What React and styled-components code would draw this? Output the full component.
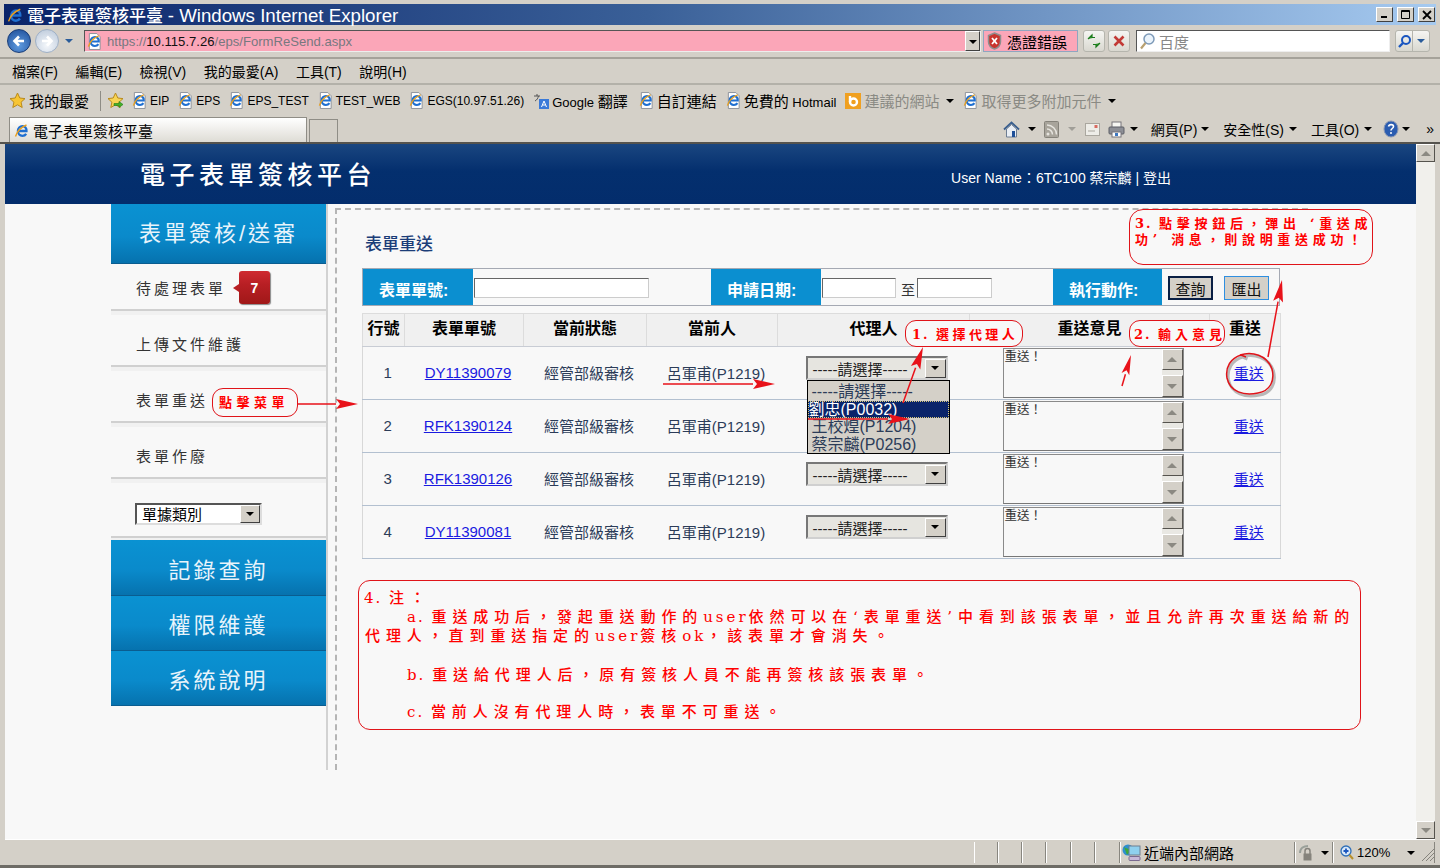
import React from 'react';
import styled, { createGlobalStyle } from 'styled-components';

const CJK = '"Liberation Sans", "Noto Sans CJK TC", sans-serif';
const ANNOT = '"DejaVu Serif", "Noto Sans CJK TC", serif';

const Global = createGlobalStyle`
  html, body { margin: 0; padding: 0; background: #d4d0c8; overflow: hidden; }
  * { box-sizing: border-box; }
`;

const Win = styled.div`
  position: relative; width: 1440px; height: 868px; overflow: hidden;
  background: #d4d0c8; font-family: ${CJK}; color: #000;
  display: flex; flex-direction: column; padding-top: 4px;
  border-bottom: 3px solid #6e6c66;
`;
const TitleBar = styled.div`
  height: 21px; margin: 0 4px; flex: none; display: flex; align-items: center; gap: 3px; padding-left: 3px;
  background: linear-gradient(90deg, #0a246a 0%, #3a6098 45%, #a6caf0 100%);
  color: #fff; font-size: 17px; font-weight: 500; white-space: nowrap;
`;
const TitleText = styled.span` flex: 1; `;
const TitleLatin = styled.span` font-size: 18.700px; `;
const WinBtn = styled.div`
  width: 17px; height: 15px; margin-right: 1px; background: #d4d0c8; display: flex; align-items: center; justify-content: center;
  border: 1px solid; border-color: #fff #404040 #404040 #fff;
`;
const AddressRow = styled.div`
  height: 34px; flex: none; display: flex; align-items: center; padding: 0 10px 0 7px; border-bottom: 2px solid #a5a29a;
`;
const NavCircle = styled.div`
  width: 24px; height: 24px; flex: none; border-radius: 50%; display: flex; align-items: center; justify-content: center; margin-right: 4px;
  border: 1px solid ${p => (p.$on ? '#1a3d78' : '#9fb0c6')};
  background: ${p => (p.$on ? 'radial-gradient(circle at 50% 70%, #5f9be0, #1c4b96)' : 'radial-gradient(circle at 50% 70%, #f4f7fb, #b8c6d8)')};
`;
const SmallCaret = styled.span`
  display: inline-block; width: 0; height: 0; flex: none;
  border-left: 4px solid transparent; border-right: 4px solid transparent;
  border-top: 4px solid ${p => p.$color || '#000'};
  margin: ${p => p.$m || '0'};
`;
const AddressBox = styled.div`
  width: 897px; height: 22px; flex: none; background: #fba6b8; display: flex; align-items: center; gap: 5px; padding-left: 2px;
  border: 1px solid; border-color: #555 #eee #eee #555; font-size: 13.100px; color: #77787f; position: relative;
`;
const UrlHost = styled.span` color: #111; `;
const ComboBtn = styled.div`
  width: 15px; height: 20px; background: #d4d0c8; display: flex; align-items: center; justify-content: center; flex: none;
  border: 1px solid; border-color: #fff #404040 #404040 #fff;
  position: ${p => (p.$end ? 'absolute' : 'static')}; right: 0; top: 0;
`;
const CertBox = styled.div`
  width: 95px; height: 22px; flex: none; margin-left: 2px; background: #fba6b8; border: 1px solid #8fa6c0; display: flex; align-items: center; gap: 5px; padding-left: 3px; font-size: 15px;
`;
const ToolBtn = styled.div`
  width: 22px; height: 22px; flex: none; margin-left: ${p => p.$ml || 3}px; border-radius: 3px; border: 1px solid #b5b5ad; background: linear-gradient(#f5f5f2, #d9d8d0);
  display: flex; align-items: center; justify-content: center;
`;
const SearchBox = styled.div`
  width: 254px; height: 22px; flex: none; margin-left: 6px; background: #fff; display: flex; align-items: center; gap: 3px; padding-left: 2px;
  border: 1px solid; border-color: #555 #eee #eee #555; color: #888; font-size: 15px;
`;
const GoBtn = styled.div`
  width: 35px; height: 22px; flex: none; margin-left: 5px; border-radius: 3px; border: 1px solid #b5b5ad; background: linear-gradient(#f5f5f2, #d9d8d0); display: flex; align-items: center;
`;
const GoCell = styled.div`
  flex: 1; height: 100%; display: flex; align-items: center; justify-content: center; border-left: ${p => (p.$sep ? '1px solid #b5b5ad' : 'none')};
`;
const MenuRow = styled.div`
  height: 26px; flex: none; display: flex; align-items: center; gap: 17.500px; padding-left: 12px; font-size: 14px; border-bottom: 2px solid #b3b1a9;
`;
const FavRow = styled.div`
  height: 33px; flex: none; display: flex; align-items: center; padding: 0 0 2px 9px; font-size: 12px; white-space: nowrap;
`;
const FavItem = styled.span`
  display: inline-flex; align-items: center; gap: 3px; margin-right: ${p => p.$mr || 9}px; color: ${p => (p.$dim ? '#8a8a84' : '#000')}; font-size: ${p => p.$fs || 12}px;
`;
const CjkPart = styled.span` font-size: 15px; `;
const FavSep = styled.span` width: 1px; height: 20px; background: #8e8c85; margin: 0 6px 0 2px; flex: none; `;
const TabRow = styled.div`
  height: 26px; flex: none; display: flex; align-items: flex-end; padding-left: 9px; border-bottom: 2px solid #55534e; position: relative;
`;
const Tab = styled.div`
  width: 298px; height: 25px; display: flex; align-items: center; gap: 3px; padding-left: 4px; font-size: 15px;
  background: linear-gradient(#fff, #dedcd5); border: 1px solid #8f8d86; border-bottom: none;
`;
const NewTab = styled.div`
  width: 29px; height: 23px; margin-left: 2px; border: 1px solid #8f8d86; border-bottom: none; background: #d4d0c8;
`;
const Commands = styled.div`
  margin-left: auto; height: 100%; display: flex; align-items: center; padding-right: 6px; padding-bottom: 2px; font-size: 14px; white-space: nowrap;
`;
const Cmd = styled.span` display: inline-flex; align-items: center; margin-left: ${p => p.$ml || 0}px; `;

const Viewport = styled.div`
  flex: 1; min-height: 0; margin: 0 5px; display: flex; border-bottom: 1px solid #fff;
`;
const Page = styled.div` flex: 1; min-width: 0; background: #f8f8f8; overflow: hidden; `;
const Scrollbar = styled.div`
  width: 19px; flex: none; display: flex; flex-direction: column; justify-content: space-between;
  background: #f1f0ec;
`;
const ScrollBtn = styled.div`
  height: ${p => p.$h || 18}px; background: #d4d0c8; display: flex; align-items: center; justify-content: center; flex: none;
  border: 1px solid; border-color: #fff #55534e #55534e #fff;
`;
const UpTri = styled.span`
  width: 0; height: 0; border-left: 5px solid transparent; border-right: 5px solid transparent;
  border-bottom: 5px solid #8b8982;
`;
const DownTri = styled.span`
  width: 0; height: 0; border-left: 5px solid transparent; border-right: 5px solid transparent;
  border-top: 5px solid #8b8982;
`;
const Header = styled.div`
  height: 60px; background: linear-gradient(#1a4680, #042f6e 45%, #032d6c); display: flex; align-items: center; justify-content: space-between;
  padding: 0 245px 0 135px; color: #fff;
`;
const Brand = styled.div` font-size: 25px; font-weight: 500; letter-spacing: 4.500px; white-space: nowrap; margin-top: -3px; `;
const UserInfo = styled.div` font-size: 14px; margin-top: 6px; white-space: nowrap; `;
const Body = styled.div` display: flex; padding-left: 106px; height: 566px; `;
const Sidebar = styled.div`
  width: 217px; flex: none; border-right: 2px solid #d2d2d2; display: flex; flex-direction: column;
`;
const BlueNav = styled.div`
  width: 215px; height: ${p => p.$h}px; margin-top: ${p => p.$mt || 0}px; padding-bottom: ${p => p.$pb || 0}px; flex: none; color: #e8f4fb; font-size: 22px; letter-spacing: 3px;
  background: linear-gradient(#0a92d2, #0a8acb 55%, #0672ae); display: flex; align-items: center; justify-content: center;
  border-bottom: 1px solid #0a5d90;
`;
const SideItem = styled.div`
  width: 215px; height: 56px; flex: none; display: flex; align-items: center; padding: 10px 0 0 25px; font-size: 15px; letter-spacing: 3px; color: #333;
  border-bottom: 2px solid #d0d0d0; box-shadow: 0 4px 0 #f1f1f1;
`;
const FirstItem = styled(SideItem)` height: 47px; padding-top: 2px; `;
const Badge = styled.span`
  position: relative; width: 31px; height: 33px; margin-left: 13px; border-radius: 3px; letter-spacing: 0;
  background: linear-gradient(#cf2a30, #b81f24 40%, #a01818); color: #fff; font-weight: 700; font-size: 14px;
  display: flex; align-items: center; justify-content: center; box-shadow: 1px 1px 1px #888;
  &::before {
    content: ''; position: absolute; left: -6px; top: 13px; width: 0; height: 0;
    border-top: 4px solid transparent; border-bottom: 4px solid transparent; border-right: 6px solid #b81f24;
  }
`;
const SideSelectWrap = styled(SideItem)` height: 59px; padding: 12px 0 0 24px; `;
const SideSelect = styled.div`
  width: 127px; height: 22px; background: #fff; border: 2px solid; border-color: #555 #ddd #ddd #555; display: flex; align-items: center; justify-content: space-between;
  padding-left: 5px; font-size: 15px; letter-spacing: 0; color: #000;
`;
const Main = styled.div`
  width: 973px; margin: 4px 0 0 7px; flex: none; border-top: 2px dashed #b5b5b5; border-left: 2px dashed #b5b5b5; padding: 22px 0 0 25px;
`;
const Title = styled.div` font-size: 17px; height: 26px; line-height: 26px; color: #1b3d78; margin: 0 0 10px 3px; font-weight: 500; `;
const FilterBar = styled.div`
  width: 918px; height: 38px; border: 1px solid #a5a9b3; display: flex; align-items: stretch; background: #f8f8f8;
`;
const FilterLabel = styled.div`
  width: ${p => p.$w}px; margin-left: ${p => p.$ml || 0}px; flex: none; background: #0b8fd0; color: #fff; font-weight: 700; font-size: 16px; display: flex; align-items: center; padding: 4px 0 0 16px;
`;
const FilterInput = styled.div`
  width: ${p => p.$w}px; height: 20px; margin: 9px 0 0 1px; flex: none; background: #fff; border: 1px solid; border-color: #666 #ccc #ccc #666;
`;
const To = styled.span` font-size: 14px; margin: 12px 1px 0 5px; line-height: 18px; color: #333; `;
const ActionBtn = styled.div`
  width: 45px; height: 24px; margin: 7px 0 0 ${p => p.$ml}px; background: #d4d0c8; font-size: 15px; display: flex; align-items: center; justify-content: center; flex: none; color: #111;
  border: ${p => (p.$primary ? '2px solid #0a1f44' : '1px solid #2f8fe0')};
`;
const Table = styled.table`
  width: 918px; margin-top: 7px; border-collapse: collapse; table-layout: fixed; border: 1px solid #d8d8d8; background: #f8f8f8;
`;
const Th = styled.th`
  height: 33px; background: #f0f0f0; border: 1px solid #dcdcdc; border-bottom: 1px solid #c8ccd4; font-size: 16px; font-weight: 700; padding: 0 0 7px; color: #000;
`;
const Tr = styled.tr` height: 53px; border-bottom: 1px solid #b3c0d0; `;
const Td = styled.td`
  padding: ${p => (p.$top ? `${p.$top}px 0 0 ${p.$left || 0}px` : '0 0 2px 8px')}; text-align: ${p => (p.$top ? 'left' : 'center')}; vertical-align: ${p => (p.$top ? 'top' : 'middle')};
  font-size: 15px; color: #2c3c58; white-space: nowrap;
`;
const Link = styled.a` color: #1a1ae0; text-decoration: underline; `;
const ComboWrap = styled.div`
  position: relative; width: 142px; height: 24px; display: flex; align-items: center; justify-content: space-between; padding: 0 0 0 5px;
  font-size: 15px; color: #222; background: #e6e5e0; border: 2px solid; border-color: #777 #d0d0d0 #d0d0d0 #777;
`;
const ComboArrow = styled.div`
  width: ${p => p.$w || 21}px; height: ${p => p.$h || 19}px; background: #d4d0c8; border: 1px solid; border-color: #fff #404040 #404040 #fff; display: flex; align-items: center; justify-content: center;
`;
const DropList = styled.div`
  position: absolute; left: -1px; top: 22px; width: 143px; height: 74px; z-index: 3; padding-top: 2px; background: #d4d0c8; border: 1px solid #000; font-size: 16px; color: #2c3c58;
  display: flex; flex-direction: column; line-height: 18px;
`;
const DropOption = styled.div`
  height: 18px; padding-left: ${p => (p.$pad ? 1 : 4)}px; white-space: nowrap; overflow: hidden;
  ${p => p.$active && 'background: #0a246a; color: #fff; outline: 1px dotted #d8c878; outline-offset: -1px;'}
`;
const Memo = styled.div`
  position: relative; width: 181px; height: 50px; background: #f8f8f8; border: 1px solid #8a8a8a; border-bottom-color: #777; font-size: 12.500px; line-height: 14px; padding: 1px 0 0 1px; color: #333;
`;
const MemoBar = styled.div`
  position: absolute; right: 0; top: 0; bottom: 0; width: 21px; display: flex; flex-direction: column; justify-content: space-between; background: #e9e8e3;
`;
const Bubble = styled.div`
  position: absolute; left: ${p => p.$x}px; top: ${p => p.$y}px; width: ${p => p.$w}px; height: ${p => p.$h}px; z-index: 5;
  border: 1px solid #e0141a; border-radius: ${p => p.$r || 11}px; background: #f8f8f8; color: #f00; font-family: ${ANNOT};
  font-weight: 700; font-size: ${p => p.$fs || 13}px; letter-spacing: ${p => p.$ls || 4.500}px; line-height: ${p => p.$lh || 17}px; padding: ${p => p.$pad || '5px 0 0 6px'}; white-space: nowrap;
`;
const Num = styled.span` letter-spacing: 2px; `;
const NoteLine = styled.div`
  font-weight: 500; font-size: 15px; letter-spacing: 5.900px; line-height: 19px; height: 19px; margin: ${p => p.$mt || 0}px 0 0 ${p => p.$ml || 0}px;
`;
const Narrow = styled.span` letter-spacing: 3px; `;
const Overlay = styled.svg` position: absolute; left: 0; top: 0; width: 1440px; height: 868px; z-index: 6; pointer-events: none; `;
const StatusBar = styled.div`
  height: 25px; flex: none; display: flex; align-items: center; padding: 2px 5px 2px 974px; font-size: 15px;
`;
const StatusCell = styled.div`
  width: ${p => p.$w}px; height: 21px; flex: none; display: flex; align-items: center; gap: ${p => p.$gap || 3}px; padding-left: ${p => p.$pl || 1}px; border-left: 1px solid #fff; border-right: 1px solid #88867f;  white-space: nowrap;
`;
const ZoomLabel = styled.span` font-size: 13px; `;

const IE = ({ page, size = 15 }) => (
  <svg width={size} height={size + (page ? 2 : 0)} viewBox={page ? '0 0 16 18' : '0 0 16 16'} style={{ flex: 'none' }}>
    {page && <path d="M2.500 .5h8l3.500 3.500v13.500h-11.500z" fill="#fff" stroke="#8b8f98" />}
    <path d="M4.200 9h8.300c.3-3-1.700-4.800-4-4.800-2.600 0-4.600 2.200-4.600 4.900 0 2.800 2 4.700 4.500 4.700 1.700 0 3-.8 3.800-2" fill="none" stroke="#1f6fd0" strokeWidth="2.300" />
    <path d="M1.500 14.500c1.500-5 6-9.500 11-11.500" fill="none" stroke="#e8a020" strokeWidth="1.400" />
  </svg>
);
const Star = () => (
  <svg width="17" height="17" viewBox="0 0 17 17" style={{ flex: 'none' }}>
    <path d="M8.500 1l2.300 5 5.200.6-3.900 3.600 1.100 5.300-4.700-2.700-4.700 2.700 1.100-5.300L1 6.600l5.200-.6z" fill="#f7c534" stroke="#b98a1c" />
  </svg>
);
const StarAdd = () => (
  <svg width="19" height="17" viewBox="0 0 19 17" style={{ flex: 'none', marginRight: 6 }}>
    <path d="M8.500 1l2.300 5 5.200.6-3.900 3.600 1.100 5.300-4.700-2.700-4.700 2.700 1.100-5.300L1 6.600l5.200-.6z" fill="#f7d454" stroke="#b98a1c" />
    <path d="M7 11.500h5v-2l4 3-4 3v-2H7z" fill="#43b02a" stroke="#1f7a12" strokeWidth=".6" />
  </svg>
);
const Shield = () => (
  <svg width="15" height="18" viewBox="0 0 15 18" style={{ flex: 'none' }}>
    <path d="M7.500 1l6 2.500v6c0 4-3 6.500-6 7.500-3-1-6-3.500-6-7.500v-6z" fill="#c9342e" stroke="#8e8e8e" strokeWidth="1.500" />
    <path d="M5 6l5 6M10 6l-5 6" stroke="#fff" strokeWidth="1.800" />
  </svg>
);
const Glass = () => (
  <svg width="17" height="18" viewBox="0 0 17 18" style={{ flex: 'none' }}>
    <circle cx="10" cy="7" r="5" fill="#eaf3fb" stroke="#7d9ab8" strokeWidth="1.500" />
    <path d="M6.500 11L2 16.500" stroke="#b8a070" strokeWidth="2.200" />
  </svg>
);
const Refresh = () => (
  <svg width="16" height="16" viewBox="0 0 16 16">
    <path d="M2 6l4-4v2.500h3M14 10l-4 4v-2.500H7" fill="#2f9d30" stroke="#1b7a1c" strokeWidth="1.200" />
  </svg>
);
const Stop = () => (
  <svg width="14" height="14" viewBox="0 0 14 14"><path d="M2.500 2.500l9 9M11.500 2.500l-9 9" stroke="#c23a36" strokeWidth="2.600" /></svg>
);
const Translate = () => (
  <svg width="16" height="16" viewBox="0 0 16 16" style={{ flex: 'none' }}>
    <rect x="6" y="6" width="10" height="10" fill="#3b7ad8" />
    <path d="M8.500 14l2.500-6 2.500 6M9.500 12h3" stroke="#fff" fill="none" />
    <path d="M1 3h6M4 1v2M2 8c2-1 3-3 3.500-5" stroke="#555" fill="none" />
  </svg>
);
const Bing = () => (
  <svg width="16" height="16" viewBox="0 0 16 16" style={{ flex: 'none' }}>
    <rect width="16" height="16" fill="#f0a020" />
    <circle cx="8.500" cy="9" r="3.500" fill="none" stroke="#fff" strokeWidth="2.400" />
    <path d="M5 3v6" stroke="#fff" strokeWidth="2.400" />
  </svg>
);
const Home = () => (
  <svg width="17" height="17" viewBox="0 0 17 17" style={{ flex: 'none' }}>
    <path d="M1 8.500L8.500 1.500 16 8.500" fill="none" stroke="#3a5f8f" strokeWidth="1.800" />
    <path d="M3.500 8v8h10V8L8.500 3.500z" fill="#e9eef5" stroke="#6d7d92" />
    <rect x="9" y="10" width="3" height="6" fill="#1e4f98" />
  </svg>
);
const Feed = () => (
  <svg width="15" height="17" viewBox="0 0 15 17" style={{ flex: 'none' }}>
    <rect x=".5" y=".5" width="14" height="16" rx="1" fill="#a8a49b" stroke="#85827a" />
    <circle cx="4" cy="13" r="1.500" fill="#e6e4de" />
    <path d="M3 8a5.500 5.500 0 0 1 5.500 5.500M3 4a9.500 9.500 0 0 1 9.500 9.500" fill="none" stroke="#e6e4de" strokeWidth="1.500" />
  </svg>
);
const Mail = () => (
  <svg width="15" height="13" viewBox="0 0 15 13" style={{ flex: 'none' }}>
    <rect x=".5" y=".5" width="14" height="12" fill="#eeede8" stroke="#aaa79f" />
    <rect x="9.500" y="2" width="3" height="3" fill="#d86a60" />
    <path d="M3 8h7" stroke="#aaa79f" />
  </svg>
);
const Printer = () => (
  <svg width="17" height="17" viewBox="0 0 17 17" style={{ flex: 'none' }}>
    <rect x="4" y="1" width="9" height="6" fill="#f6f6f3" stroke="#77757a" />
    <rect x="1" y="6" width="15" height="7" rx="1" fill="#8d8f96" stroke="#5d5f66" />
    <rect x="4" y="11" width="9" height="5" fill="#fff" stroke="#77757a" />
    <rect x="7" y="12" width="3" height="3" fill="#3e78c0" />
  </svg>
);
const Help = () => (
  <svg width="16" height="18" viewBox="0 0 16 18" style={{ flex: 'none' }}>
    <ellipse cx="8" cy="9" rx="7" ry="8" fill="#2a5cb0" stroke="#8a98b4" />
    <path d="M5.500 6.500c.5-2.500 5-2.500 5 0 0 2-2.500 2-2.500 4" fill="none" stroke="#fff" strokeWidth="1.600" />
    <circle cx="8" cy="13" r="1" fill="#fff" />
  </svg>
);
const Monitor = () => (
  <svg width="19" height="19" viewBox="0 0 19 19" style={{ flex: 'none' }}>
    <circle cx="6" cy="7" r="5.500" fill="#2d8fd0" />
    <path d="M2 4c2 2 5 1 6 3s-2 3-3 5" fill="#3fa83a" />
    <rect x="7" y="3" width="11" height="9" fill="#8fd0ee" stroke="#6f7f90" />
    <rect x="7" y="13.500" width="11" height="4" rx="1" fill="#c7b8d8" stroke="#7a6a90" />
  </svg>
);
const Lock = () => (
  <svg width="17" height="16" viewBox="0 0 17 16" style={{ flex: 'none' }}>
    <path d="M1 8c0-5 4-7 8-7" fill="none" stroke="#9aa09a" strokeWidth="2" />
    <path d="M6 9V6a2.500 2.500 0 0 1 5 0v3" fill="none" stroke="#85837c" strokeWidth="1.500" />
    <rect x="4.500" y="8.500" width="8" height="7" fill="#85837c" />
  </svg>
);
const Zoom = () => (
  <svg width="14" height="15" viewBox="0 0 14 15" style={{ flex: 'none' }}>
    <circle cx="6" cy="6" r="5" fill="#d8e8f8" stroke="#2f6fb8" strokeWidth="1.300" />
    <path d="M3.500 6h5M6 3.500v5" stroke="#1a56c0" strokeWidth="1.800" />
    <path d="M9.500 10l3.500 4" stroke="#b8902a" strokeWidth="2" />
  </svg>
);
const Grip = () => (
  <svg width="16" height="16" viewBox="0 0 16 16" style={{ position: 'absolute', right: 5, bottom: 3 }}>
    <path d="M15 3L3 15M15 7l-8 8M15 11l-4 4" stroke="#85837c" />
  </svg>
);
const Arrow = ({ x1, y1, x2, y2, head = 22, wide = 5 }) => {
  const len = Math.hypot(x2 - x1, y2 - y1);
  const ux = (x2 - x1) / len;
  const uy = (y2 - y1) / len;
  const bx = x2 - ux * head;
  const by = y2 - uy * head;
  const pts = `${x2},${y2} ${bx - uy * wide},${by + ux * wide} ${bx + ux * 4},${by + uy * 4} ${bx + uy * wide},${by - ux * wide}`;
  return (
    <g>
      <line x1={x1} y1={y1} x2={bx} y2={by} stroke="#e8121a" strokeWidth="1.500" />
      <polygon points={pts} fill="#e8121a" />
    </g>
  );
};

const rows = [
  { n: 1, id: 'DY11390079', open: true },
  { n: 2, id: 'RFK1390124', hideSelect: true },
  { n: 3, id: 'RFK1390126' },
  { n: 4, id: 'DY11390081' },
];
const favs = ['EIP', 'EPS', 'EPS_TEST', 'TEST_WEB', 'EGS(10.97.51.26)'];
const CIRCLE = 'M1240 355c12-4 27 0 32 14 3 12-2 22-14 24-14 3-28-1-31-15-2-11 4-20 14-23l5 2';

export default function App() {
  return (
    <Win>
      <Global />
      <TitleBar>
        <IE size={17} />
        <TitleText>電子表單簽核平臺 <TitleLatin>- Windows Internet Explorer</TitleLatin></TitleText>
        <WinBtn><svg width="9" height="9"><rect x="1" y="6" width="6" height="2" /></svg></WinBtn>
        <WinBtn><svg width="11" height="11"><path d="M1.500 1.500h8v8h-8z M1 2.500h9" fill="none" stroke="#000" /></svg></WinBtn>
        <WinBtn><svg width="10" height="10"><path d="M1 1l8 8M9 1l-8 8" stroke="#000" strokeWidth="1.800" /></svg></WinBtn>
      </TitleBar>
      <AddressRow>
        <NavCircle $on><svg width="16" height="16"><path d="M13 8H4M8 3.500L3.500 8 8 12.500" fill="none" stroke="#fff" strokeWidth="2.600" /></svg></NavCircle>
        <NavCircle><svg width="16" height="16"><path d="M3 8h9M8 3.500L12.500 8 8 12.500" fill="none" stroke="#fff" strokeWidth="2.600" /></svg></NavCircle>
        <SmallCaret $color="#2a5c9a" $m="0 11px 0 2px" />
        <AddressBox>
          <IE page size={15} />
          <span>https://<UrlHost>10.115.7.26</UrlHost>/eps/FormReSend.aspx</span>
          <ComboBtn $end><SmallCaret $m="2px 0 0" /></ComboBtn>
        </AddressBox>
        <CertBox><Shield />憑證錯誤</CertBox>
        <ToolBtn $ml={5}><Refresh /></ToolBtn>
        <ToolBtn><Stop /></ToolBtn>
        <SearchBox><Glass />百度</SearchBox>
        <GoBtn>
          <GoCell><svg width="15" height="15" viewBox="0 0 15 15"><circle cx="9" cy="6" r="4" fill="none" stroke="#1a56c0" strokeWidth="2" /><path d="M6 9l-4 4" stroke="#1a56c0" strokeWidth="2.400" /></svg></GoCell>
          <GoCell $sep><SmallCaret $color="#2a5c9a" /></GoCell>
        </GoBtn>
      </AddressRow>
      <MenuRow>
        <span>檔案(F)</span><span>編輯(E)</span><span>檢視(V)</span><span>我的最愛(A)</span><span>工具(T)</span><span>說明(H)</span>
      </MenuRow>
      <FavRow>
        <FavItem $fs={15}><Star />我的最愛</FavItem>
        <FavSep />
        <StarAdd />
        {favs.map(t => <FavItem key={t}><IE page />{t}</FavItem>)}
        <FavItem $fs={13} $mr={11}><Translate /><span>Google <CjkPart>翻譯</CjkPart></span></FavItem>
        <FavItem $fs={15}><IE page />自訂連結</FavItem>
        <FavItem $fs={13}><IE page /><span><CjkPart>免費的</CjkPart> Hotmail</span></FavItem>
        <FavItem $dim $fs={15}><Bing />建議的網站<SmallCaret $m="0 0 0 4px" /></FavItem>
        <FavItem $dim $fs={15}><IE page />取得更多附加元件<SmallCaret $m="0 0 0 4px" /></FavItem>
      </FavRow>
      <TabRow>
        <Tab><IE size={16} />電子表單簽核平臺</Tab>
        <NewTab />
        <Commands>
          <Home /><SmallCaret $m="0 8px 0 8px" />
          <Feed /><SmallCaret $color="#a09e98" $m="0 9px 0 9px" />
          <Mail /><Cmd $ml={8}><Printer /></Cmd><SmallCaret $m="0 13px 0 5px" />
          <Cmd>網頁(P)</Cmd><SmallCaret $m="0 14px 0 4px" />
          <Cmd>安全性(S)</Cmd><SmallCaret $m="0 14px 0 5px" />
          <Cmd>工具(O)</Cmd><SmallCaret $m="0 11px 0 5px" />
          <Help /><SmallCaret $m="0 16px 0 3px" />
          <Cmd>»</Cmd>
        </Commands>
      </TabRow>
      <Viewport>
        <Page>
          <Header>
            <Brand>電子表單簽核平台</Brand>
            <UserInfo>User Name：6TC100 蔡宗麟 | 登出</UserInfo>
          </Header>
          <Body>
            <Sidebar>
              <BlueNav $h={60} $pb={5}>表單簽核/送審</BlueNav>
              <FirstItem>待處理表單<Badge>7</Badge></FirstItem>
              <SideItem>上傳文件維護</SideItem>
              <SideItem>表單重送</SideItem>
              <SideItem>表單作廢</SideItem>
              <SideSelectWrap>
                <SideSelect>單據類別<ComboArrow $w={20} $h={18}><SmallCaret /></ComboArrow></SideSelect>
              </SideSelectWrap>
              <BlueNav $h={56} $mt={2}>記錄查詢</BlueNav>
              <BlueNav $h={55}>權限維護</BlueNav>
              <BlueNav $h={55}>系統說明</BlueNav>
            </Sidebar>
            <Main>
              <Title>表單重送</Title>
              <FilterBar>
                <FilterLabel $w={110}>表單單號:</FilterLabel>
                <FilterInput $w={175} />
                <FilterLabel $w={110} $ml={62}>申請日期:</FilterLabel>
                <FilterInput $w={74} />
                <To>至</To>
                <FilterInput $w={75} />
                <FilterLabel $w={109} $ml={61}>執行動作:</FilterLabel>
                <ActionBtn $primary $ml={6}>查詢</ActionBtn>
                <ActionBtn $ml={11}>匯出</ActionBtn>
              </FilterBar>
              <Table>
                <colgroup>
                  <col width="42" /><col width="119" /><col width="123" /><col width="131" /><col width="192" /><col width="240" /><col width="71" />
                </colgroup>
                <thead>
                  <tr>
                    <Th>行號</Th><Th>表單單號</Th><Th>當前狀態</Th><Th>當前人</Th><Th>代理人</Th><Th>重送意見</Th><Th>重送</Th>
                  </tr>
                </thead>
                <tbody>
                  {rows.map(r => (
                    <Tr key={r.n}>
                      <Td>{r.n}</Td>
                      <Td><Link>{r.id}</Link></Td>
                      <Td>經管部級審核</Td>
                      <Td>呂軍甫(P1219)</Td>
                      <Td $top={9} $left={28}>
                        {!r.hideSelect && (
                          <ComboWrap>
                            -----請選擇-----
                            <ComboArrow><SmallCaret /></ComboArrow>
                            {r.open && (
                              <DropList>
                                <DropOption>-----請選擇-----</DropOption>
                                <DropOption $active $pad>劉忠(P0032)</DropOption>
                                <DropOption>王校煌(P1204)</DropOption>
                                <DropOption>蔡宗麟(P0256)</DropOption>
                              </DropList>
                            )}
                          </ComboWrap>
                        )}
                      </Td>
                      <Td $top={1} $left={33}>
                        <Memo>
                          重送！
                          <MemoBar>
                            <ScrollBtn $h={21}><UpTri /></ScrollBtn>
                            <ScrollBtn $h={22}><DownTri /></ScrollBtn>
                          </MemoBar>
                        </Memo>
                      </Td>
                      <Td><Link>重送</Link></Td>
                    </Tr>
                  ))}
                </tbody>
              </Table>
            </Main>
          </Body>
        </Page>
        <Scrollbar>
          <ScrollBtn $h={18}><UpTri /></ScrollBtn>
          <ScrollBtn $h={18}><DownTri /></ScrollBtn>
        </Scrollbar>
      </Viewport>
      <StatusBar>
        <StatusCell $w={24} /><StatusCell $w={24} /><StatusCell $w={24} /><StatusCell $w={25} /><StatusCell $w={24} /><StatusCell $w={25} />
        <StatusCell $w={175}><Monitor />近端內部網路</StatusCell>
        <StatusCell $w={38} $gap={5} $pl={3}><Lock /><SmallCaret /></StatusCell>
        <StatusCell $w={102} $gap={3} $pl={6}><Zoom /><ZoomLabel>120%</ZoomLabel><SmallCaret $m="0 0 0 14px" /></StatusCell>
        <Grip />
      </StatusBar>

      <Bubble $x={212} $y={388} $w={86} $h={29} $pad="5px 0 0 6px">點擊菜單</Bubble>
      <Bubble $x={905} $y={320} $w={118} $h={27} $pad="5px 0 0 6px" $ls={3.400}><Num>1. </Num>選擇代理人</Bubble>
      <Bubble $x={1129} $y={320} $w={96} $h={27} $pad="5px 0 0 4px" $ls={4}><Num>2. </Num>輸入意見</Bubble>
      <Bubble $x={1129} $y={209} $w={244} $h={56} $pad="6px 0 0 5px" $ls={4.700} $r={14} $lh={16}>
        <Num>3. </Num>點擊按鈕后，彈出 ‘重送成<br />功’ 消息，則說明重送成功！
      </Bubble>
      <Bubble $x={358} $y={580} $w={1003} $h={150} $pad="8px 0 0 5px" $r={12}>
        <NoteLine><Num>4. </Num>注：</NoteLine>
        <NoteLine $ml={43}><Num>a. </Num>重送成功后，發起重送動作的<Narrow>user</Narrow>依然可以在‘表單重送’中看到該張表單，並且允許再次重送給新的</NoteLine>
        <NoteLine $ml={1}>代理人，直到重送指定的<Narrow>user</Narrow>簽核<Narrow>ok</Narrow>，該表單才會消失。</NoteLine>
        <NoteLine $ml={43} $mt={20}><Num>b. </Num>重送給代理人后，原有簽核人員不能再簽核該張表單。</NoteLine>
        <NoteLine $ml={43} $mt={18}><Num>c. </Num>當前人沒有代理人時，表單不可重送。</NoteLine>
      </Bubble>

      <Overlay viewBox="0 0 1440 868">
        <Arrow x1={298} y1={404} x2={358} y2={404} />
        <Arrow x1={663} y1={384} x2={775} y2={384} />
        <Arrow x1={808} y1={419} x2={910} y2={419} />
        <Arrow x1={903} y1={403} x2={923} y2={347} />
        <Arrow x1={1122} y1={386} x2={1131} y2={355} head={20} wide={4} />
        <Arrow x1={1268} y1={357} x2={1282} y2={280} head={22} wide={5} />
        <path d={CIRCLE} fill="none" stroke="#b8b8b8" strokeWidth="3" transform="translate(1.500 2)" />
        <path d={CIRCLE} fill="none" stroke="#e0141a" strokeWidth="1.500" />
      </Overlay>
    </Win>
  );
}
